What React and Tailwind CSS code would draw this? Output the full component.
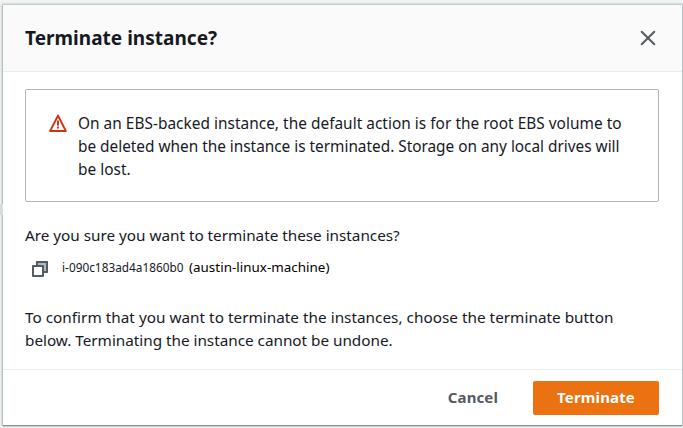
function WarningIcon() {
  return (
    <svg className="mt-[24px] ml-[23px] h-[18px] w-[18px] shrink-0" viewBox="0 0 18 18" fill="none" stroke="#d13212">
      <path d="M9 1.6 16.8 16.9H1.2Z" strokeWidth="2" strokeLinejoin="round" />
      <path d="M9 6.5v5M9 12.5v2" strokeWidth="2" />
    </svg>
  );
}

function CopyIcon() {
  return (
    <svg className="relative top-px h-4 w-4 shrink-0" viewBox="0 0 16 16" fill="none" stroke="#545b64" strokeWidth="2" strokeLinejoin="round">
      <path d="M5 4V1h10v10h-3" fill="#b4b9be" />
      <path d="M5 4V1h10v10h-3" />
      <path d="M1 5h10v10H1z" fill="#fff" />
    </svg>
  );
}

function CloseIcon() {
  return (
    <svg className="h-4 w-4" viewBox="0 0 16 16" fill="none" stroke="#545b64" strokeWidth="2" strokeLinecap="round">
      <path d="M1.7 1.7l12.6 12.6M14.3 1.7L1.7 14.3" />
    </svg>
  );
}

export default function App() {
  return (
    <div className="relative h-[428px] w-[683px] overflow-hidden bg-[#f2f3f3] pt-[5px] pl-[3px] font-['Noto_Sans',sans-serif] text-[15.3px] leading-[23px] tracking-[0.02px] whitespace-nowrap text-[#16191f]">
      <div className="absolute top-[204px] left-0 h-[11px] w-[3px] bg-[#d9dcdd]" />
      <div className="flex h-[420px] w-[679px] flex-col bg-white shadow-[0_1px_1px_#879196,0_0_2px_1px_#aab7b8]">
        <header className="flex h-[67px] shrink-0 items-center justify-between border-b border-[#eaeded] bg-[#fafafa] pr-[26px] pl-[22px]">
          <h2 className="text-[19px] font-bold">Terminate instance?</h2>
          <button aria-label="Close"><CloseIcon /></button>
        </header>
        <main className="flex h-[297px] shrink-0 flex-col px-[22px] pt-[17px]">
          <div className="flex h-[113px] w-[634px] shrink-0 rounded-[2px] border border-[#aab7b8] text-[15.4px]">
            <WarningIcon />
            <div className="mt-[22px] ml-[11px]">
              <p className="tracking-[0.03px]">On an EBS-backed instance, the default action is for the root EBS volume to</p>
              <p className="tracking-[-0.02px]">be deleted when the instance is terminated. Storage on any local drives will</p>
              <p>be lost.</p>
            </div>
          </div>
          <p className="mt-[22px] tracking-[-0.02px]">Are you sure you want to terminate these instances?</p>
          <div className="mt-[9px] flex h-[23px] items-center pl-[7px]">
            <CopyIcon />
            <span className="ml-[14px] w-[127px] text-[11.8px]">i-090c183ad4a1860b0</span>
            <span className="text-[13.4px] text-black">(austin-linux-machine)</span>
          </div>
          <div className="mt-[27px]">
            <p>To confirm that you want to terminate the instances, choose the terminate button</p>
            <p className="tracking-[-0.02px]">below. Terminating the instance cannot be undone.</p>
          </div>
        </main>
        <footer className="flex h-[56px] shrink-0 items-center justify-end gap-[35px] border-t border-[#eaeded] pr-[23px]">
          <button className="text-[15px] font-bold tracking-[0.1px] text-[#545b64]">Cancel</button>
          <button className="h-[34px] w-[126px] rounded-[2px] bg-[#ec7211] pb-px text-[15px] font-bold tracking-[0.15px] text-white">Terminate</button>
        </footer>
      </div>
    </div>
  );
}
